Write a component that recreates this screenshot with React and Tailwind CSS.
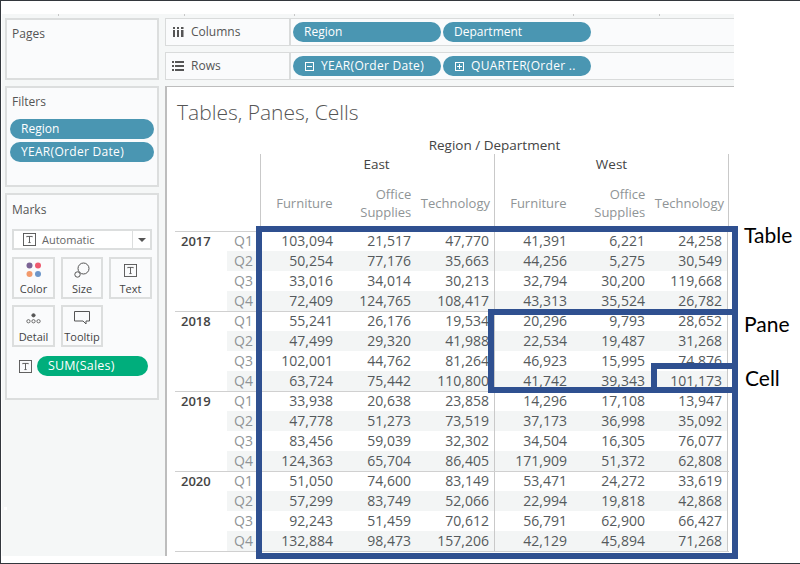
const FONT = "font-['Open_Sans',sans-serif]";

const DATA = [
  ["2017", [
    ["Q1", "103,094", "21,517", "47,770", "41,391", "6,221", "24,258"],
    ["Q2", "50,254", "77,176", "35,663", "44,256", "5,275", "30,549"],
    ["Q3", "33,016", "34,014", "30,213", "32,794", "30,200", "119,668"],
    ["Q4", "72,409", "124,765", "108,417", "43,313", "35,524", "26,782"],
  ]],
  ["2018", [
    ["Q1", "55,241", "26,176", "19,534", "20,296", "9,793", "28,652"],
    ["Q2", "47,499", "29,320", "41,988", "22,534", "19,487", "31,268"],
    ["Q3", "102,001", "44,762", "81,264", "46,923", "15,995", "74,876"],
    ["Q4", "63,724", "75,442", "110,800", "41,742", "39,343", "101,173"],
  ]],
  ["2019", [
    ["Q1", "33,938", "20,638", "23,858", "14,296", "17,108", "13,947"],
    ["Q2", "47,778", "51,273", "73,519", "37,173", "36,998", "35,092"],
    ["Q3", "83,456", "59,039", "32,302", "34,504", "16,305", "76,077"],
    ["Q4", "124,363", "65,704", "86,405", "171,909", "51,372", "62,808"],
  ]],
  ["2020", [
    ["Q1", "51,050", "74,600", "83,149", "53,471", "24,272", "33,619"],
    ["Q2", "57,299", "83,749", "52,066", "22,994", "19,818", "42,868"],
    ["Q3", "92,243", "51,459", "70,612", "56,791", "62,900", "66,427"],
    ["Q4", "132,884", "98,473", "157,206", "42,129", "45,894", "71,268"],
  ]],
];

const TBox = ({ className = "" }) => (
  <svg viewBox="0 0 14 14" className={className} fill="none" stroke="#555" strokeWidth="1">
    <rect x="0.5" y="0.5" width="13" height="13" />
    <path d="M4 4.5V3.7h6v.8M7 3.7v6.6M5.8 10.3h2.4" />
  </svg>
);

function Pill({ children, className = "", icon }) {
  return (
    <div className={`flex items-center h-5 rounded-full bg-[#4a96b2] text-white text-[12px] leading-[20px] pl-[11px] whitespace-nowrap ${className}`}>
      {icon === "minus" && (
        <svg viewBox="0 0 9 9" className="w-[9px] h-[9px] mr-[7px] ml-[1px]" fill="none" stroke="#fff"><rect x=".5" y=".5" width="8" height="8" /><path d="M2 4.5h5" /></svg>
      )}
      {icon === "plus" && (
        <svg viewBox="0 0 9 9" className="w-[9px] h-[9px] mr-[7px] ml-[1px]" fill="none" stroke="#fff"><rect x=".5" y=".5" width="8" height="8" /><path d="M2 4.5h5M4.5 2v5" /></svg>
      )}
      {children}
    </div>
  );
}

function Shelf({ icon, label, children }) {
  return (
    <div className="flex h-[28px] bg-[#fafbfc] border-y border-[#d9dbdb]">
      <div className="w-[126px] flex items-center border-l border-r-2 border-[#d9dbdb] text-[12px] text-[#555] pl-[6px]">
        <div className="w-[19px] shrink-0">{icon}</div>
        <span>{label}</span>
      </div>
      <div className="flex items-center pl-[2px] gap-[2px]">{children}</div>
    </div>
  );
}

function MarkBtn({ icon, label }) {
  return (
    <div className="h-[42px] border-2 border-[#dcdede] bg-[#fafbfc] flex flex-col items-center pt-[1px] text-[11px] leading-none text-[#444]">
      <div className="h-[20px] flex items-center justify-center">{icon}</div>
      <div className="mt-[3px]">{label}</div>
    </div>
  );
}

function TableRow({ row, first, yearLabel }) {
  const [q, ...vals] = row;
  const striped = q === "Q2" || q === "Q4";
  const stripe = striped ? "bg-[#f3f5f5]" : "";
  return (
    <div className={`grid grid-cols-[52px_33px_repeat(6,78px)] text-[14px] ${first ? "h-[19px] leading-[18px]" : "h-[20px] leading-[20px]"}`}>
      <div className="pl-[6px] font-semibold text-[13px] text-[#444]">{first ? yearLabel : ""}</div>
      <div className={`pl-[7px] text-[#8f9496] ${stripe}`}>{q}</div>
      {vals.map((v, i) => (
        <div
          key={i}
          className={`text-right pr-[5px] text-[#555a5c] ${stripe} ${i === 0 || i === 3 ? "border-l border-[#c9c9c9]" : ""} ${i === 5 ? "border-r border-[#c9c9c9]" : ""}`}
        >
          {v}
        </div>
      ))}
    </div>
  );
}

export default function App() {
  return (
    <div className={`relative w-[800px] h-[564px] bg-white overflow-hidden border-t border-l border-b border-[#33373d] ${FONT}`}>
      <div className="w-[732px] h-[542px] mt-[13px] ml-[1px] bg-[#f5f7f7] flex relative">
        <div className="absolute top-0 left-[56px] w-px h-[2px] bg-[#c8c8c8]" />
        <div className="absolute top-0 left-[182px] w-px h-[2px] bg-[#c8c8c8]" />
        <div className="absolute top-0 left-[292px] w-px h-[2px] bg-[#c8c8c8]" />
        <div className="absolute top-0 left-[571px] w-px h-[2px] bg-[#c8c8c8]" />
        <div className="absolute top-0 left-[657px] w-px h-[2px] bg-[#c8c8c8]" />

        {/* left column */}
        <div className="w-[163px] pl-[3px] pr-[6px] pt-[4px] flex flex-col gap-[6px] shrink-0">
          <div className="h-[62px] border-2 border-[#dcdede] bg-[#fafbfc] px-[5px] pt-[6px] text-[12px] text-[#555] leading-[16px]">Pages</div>
          <div className="h-[101px] border-2 border-[#dcdede] bg-[#fafbfc] text-[12px] text-[#555] leading-[16px]">
            <div className="px-[5px] pt-[6px]">Filters</div>
            <div className="pl-[3px] pr-[3px] mt-[9px] flex flex-col gap-[3px]">
              <Pill>Region</Pill>
              <Pill className="tracking-[0.3px]">YEAR(Order Date)</Pill>
            </div>
          </div>
          <div className="h-[207px] border-2 border-[#dcdede] bg-[#fafbfc] text-[12px] text-[#555] leading-[16px] px-[5px]">
            <div className="pt-[7px]">Marks</div>
            <div className="mt-[11px] h-[21px] flex items-center border-2 border-[#dcdede] bg-white">
              <TBox className="w-[13px] h-[13px] ml-[9px]" />
              <span className="ml-[6px] flex-1 text-[11px] text-[#666]">Automatic</span>
              <div className="w-[18px] h-full border-l border-[#dcdede] flex items-center justify-center">
                <div className="w-0 h-0 border-x-[4px] border-x-transparent border-t-[4px] border-t-[#555]" />
              </div>
            </div>
            <div className="grid grid-cols-[43px_42px_43px] gap-x-[6px] gap-y-[6px] mt-[7px]">
              <MarkBtn label="Color" icon={
                <svg viewBox="0 0 16 16" className="w-[16px] h-[16px]">
                  <circle cx="3.5" cy="3.5" r="3" fill="#7b6495" />
                  <circle cx="12" cy="3.5" r="3" fill="#ee5a6f" />
                  <circle cx="3.5" cy="12" r="3" fill="#f29a6c" />
                  <circle cx="12" cy="12" r="3" fill="#6d96c9" />
                </svg>
              } />
              <MarkBtn label="Size" icon={
                <svg viewBox="0 0 16 16" className="w-[16px] h-[16px]" fill="none" stroke="#555" strokeWidth="1">
                  <circle cx="9.5" cy="6.5" r="5.5" />
                  <circle cx="3.5" cy="12.5" r="2.7" fill="#fafbfc" />
                </svg>
              } />
              <MarkBtn label="Text" icon={<TBox className="w-[13px] h-[13px]" />} />
              <MarkBtn label="Detail" icon={
                <svg viewBox="0 0 16 12" className="w-[15px] h-[11px]" fill="none" stroke="#555" strokeWidth="0.9">
                  <circle cx="8" cy="2.5" r="1.8" fill="#555" />
                  <circle cx="2.5" cy="9" r="1.8" />
                  <circle cx="8" cy="9" r="1.8" />
                  <circle cx="13.5" cy="9" r="1.8" />
                </svg>
              } />
              <MarkBtn label="Tooltip" icon={
                <svg viewBox="0 0 16 14" className="w-[16px] h-[14px]" fill="none" stroke="#555" strokeWidth="1">
                  <path d="M.5.5h15v9.5h-3.5v3l-3-3H.5z" />
                </svg>
              } />
            </div>
            <div className="flex items-center mt-[9px] pl-[7px]">
              <TBox className="w-[13px] h-[13px]" />
              <div className="ml-[5px] w-[111px] h-[20px] rounded-full bg-[#00ae7c] text-white pl-[11px] text-[12.5px] tracking-[0.2px] leading-[20px]">SUM(Sales)</div>
            </div>
          </div>
        </div>

        {/* right column */}
        <div className="flex-1 pt-[4px] flex flex-col gap-[6px] min-w-0">
          <Shelf label="Columns" icon={
            <svg viewBox="0 0 11 10" className="w-[11px] h-[10px] ml-[1px]" fill="#555"><rect x="0" y="3" width="2" height="7" /><rect x="4" y="3" width="2" height="7" /><rect x="8" y="3" width="2.5" height="7" /><rect x="0" y="0" width="2" height="2" /><rect x="4" y="0" width="2" height="2" /><rect x="8" y="0" width="2.5" height="2" /></svg>
          }>
            <Pill className="w-[148px]">Region</Pill>
            <Pill className="w-[148px]">Department</Pill>
          </Shelf>
          <Shelf label="Rows" icon={
            <svg viewBox="0 0 12 10" className="w-[12px] h-[10px]" fill="#555"><rect x="0" y="0" width="2" height="2" /><rect x="3" y="0" width="9" height="2" /><rect x="0" y="4" width="2" height="2" /><rect x="3" y="4" width="9" height="2" /><rect x="0" y="8" width="2" height="2" /><rect x="3" y="8" width="9" height="2" /></svg>
          }>
            <Pill className="w-[148px] tracking-[0.3px]" icon="minus">YEAR(Order Date)</Pill>
            <Pill className="w-[148px] tracking-[0.3px]" icon="plus">QUARTER(Order ..</Pill>
          </Shelf>
          <div className="h-[470px] bg-white border-t border-l-2 border-[#bdbdbd] pl-[8px]">
            <div className="mt-[12px] h-[26px] ml-[2px] text-[21px] leading-[26px] font-light text-[#555]">Tables, Panes, Cells</div>
            <div className="ml-[85px] mt-[13px] w-[469px]">
              <div className="text-center text-[13.5px] leading-[14px] font-medium text-[#444] h-[14px]">Region / Department</div>
              <div className="flex h-[77px] mt-[2px] border-r border-[#c9c9c9]">
                {["East", "West"].map((r) => (
                  <div key={r} className="w-[234px] border-l border-[#c9c9c9]">
                    <div className={`text-center text-[13.5px] font-medium text-[#444] leading-[20px] h-[20px] ${r === "East" ? "pr-[2px]" : ""}`}>{r}</div>
                    <div className="grid grid-cols-3 text-[13px] leading-[18px] text-[#8f9496] mt-[11px]">
                      <div className="text-right pr-[6px] pt-[9px]">Furniture</div>
                      <div className="text-right pr-[5px]">Office<br />Supplies</div>
                      <div className="text-right pr-[4px] pt-[9px]">Technology</div>
                    </div>
                  </div>
                ))}
              </div>
            </div>
            {DATA.map(([year, rows]) => (
              <div key={year} className="border-t border-[#d0d0d0] w-[554px] h-[80px]">
                {rows.map((row, j) => (
                  <TableRow key={j} row={row} first={j === 0} yearLabel={year} />
                ))}
              </div>
            ))}
            <div className="w-[554px] border-t border-[#d0d0d0]" />
          </div>
        </div>
      </div>

      {/* stray speck in the reference */}
      <div className="absolute left-[3px] top-[506px] w-[3px] h-[3px] bg-white" />

      {/* annotations */}
      <div className="absolute left-[255px] top-[225px] w-[482px] h-[333px] border-[6px] border-[#2f5090]" />
      <div className="absolute left-[487px] top-[308px] w-[250px] h-[84px] border-[6px] border-[#2f5090]" />
      <div className="absolute left-[650px] top-[362px] w-[87px] h-[30px] border-[6px] border-[#2f5090]" />
      <div className="absolute left-[743px] top-[222px] text-[21px] leading-[24px] text-black font-['Lato',sans-serif]">Table</div>
      <div className="absolute left-[743px] top-[311px] text-[21px] leading-[24px] text-black font-['Lato',sans-serif]">Pane</div>
      <div className="absolute left-[744px] top-[365px] text-[21px] leading-[24px] text-black font-['Lato',sans-serif]">Cell</div>
    </div>
  );
}
